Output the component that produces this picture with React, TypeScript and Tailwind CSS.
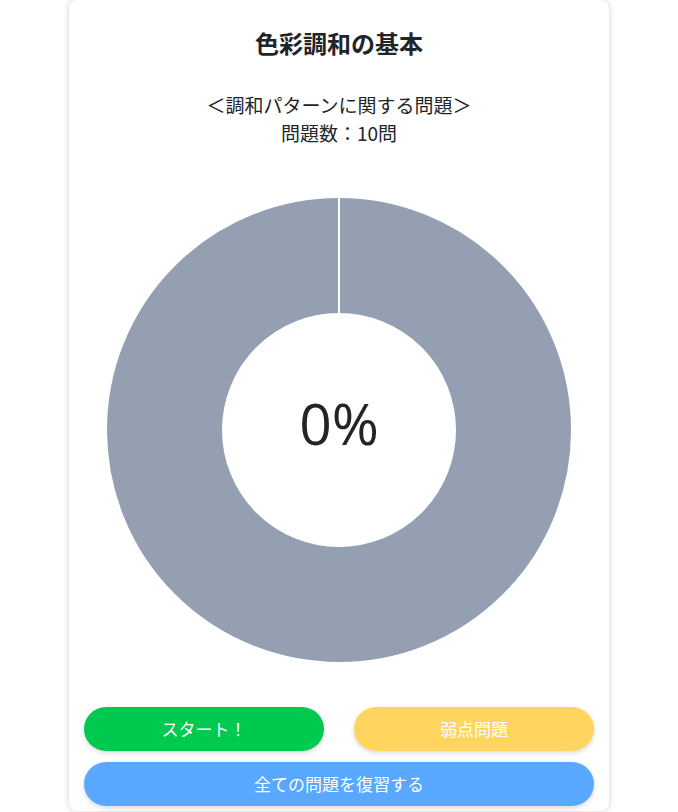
import React from "react";

export default function App() {
  const font = { fontFamily: '"Noto Sans CJK JP", "Noto Sans", sans-serif' };
  return (
    <div className="w-full min-h-[812px] bg-white flex justify-center" style={font}>
      <div className="w-[540px] h-[811px] bg-white rounded-lg shadow-[0_0_6px_rgba(0,0,0,0.18)] px-[15px] pt-[25px] flex flex-col text-[#212529]">
        <h1 className="text-center text-[24px] font-bold leading-[36px]">色彩調和の基本</h1>
        <div className="mt-[30px] text-center text-[19px] leading-[28px]">
          <div>＜調和パターンに関する問題＞</div>
          <div>問題数：10問</div>
        </div>
        <div className="mt-[51px] flex justify-center">
          <div className="relative w-[464px] h-[464px]">
            <svg width="464" height="464" viewBox="0 0 464 464">
              <circle cx="232" cy="232" r="174.5" fill="none" stroke="#94a0b2" strokeWidth="115" />
              <line x1="232" y1="0" x2="232" y2="116" stroke="#ffffff" strokeWidth="2" />
            </svg>
            <div className="absolute inset-0 flex items-center justify-center pb-[14px] text-[57px] leading-none" style={{ fontFamily: '"Open Sans", "Noto Sans", sans-serif' }}>
              0%
            </div>
          </div>
        </div>
        <div className="mt-[45px] grid grid-cols-2 gap-x-[30px] gap-y-[11px]">
          <button className="h-[44px] rounded-full bg-[#00c94f] text-white text-[17px] shadow-[0_2px_5px_rgba(0,0,0,0.15)]">スタート！</button>
          <button className="h-[44px] rounded-full bg-[#ffd560] text-white text-[17px] shadow-[0_2px_5px_rgba(0,0,0,0.15)]">弱点問題</button>
          <button className="col-span-2 h-[44px] rounded-full bg-[#58a8ff] text-white text-[17px] shadow-[0_2px_5px_rgba(0,0,0,0.15)]">全ての問題を復習する</button>
        </div>
      </div>
    </div>
  );
}
